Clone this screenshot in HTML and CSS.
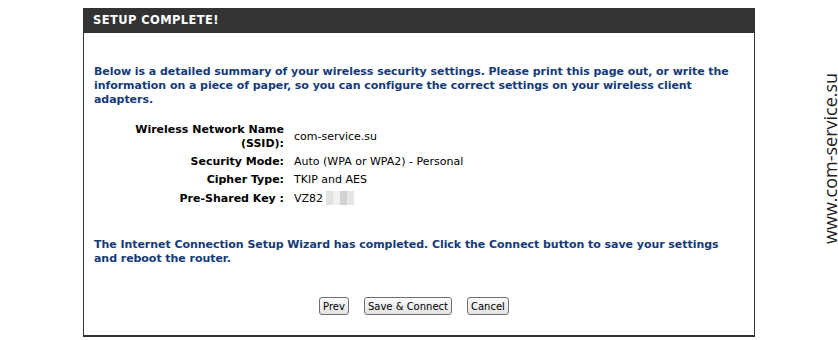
FILE: index.html
```
<!DOCTYPE HTML>
<html lang="en">
<head>
    <title>Setup Complete</title>
    <meta charset="utf-8">
    <link rel="stylesheet" href="styles.css">
</head>
<body>

<div class="page">
    <div class="box">
        <div class="box-head">SETUP COMPLETE!</div>
        <div class="box-body">
            <p class="note">Below is a detailed summary of your wireless security settings. Please print this page out, or write the information on a piece of paper, so you can configure the correct settings on your wireless client adapters.</p>

            <table class="summary">
                <tr class="tall">
                    <td class="label">Wireless Network Name (SSID):</td>
                    <td class="value">com-service.su</td>
                </tr>
                <tr>
                    <td class="label">Security Mode:</td>
                    <td class="value">Auto (WPA or WPA2) - Personal</td>
                </tr>
                <tr>
                    <td class="label">Cipher Type:</td>
                    <td class="value">TKIP and AES</td>
                </tr>
                <tr>
                    <td class="label">Pre-Shared Key :</td>
                    <td class="value">VZ82<span class="blur"><i class="b1"></i><i class="b2"></i><i class="b3"></i><i class="b4"></i></span></td>
                </tr>
            </table>

            <p class="note second">The Internet Connection Setup Wizard has completed. Click the Connect button to save your settings and reboot the router.</p>

            <div class="actions">
                <button type="button">Prev</button>
                <button type="button">Save &amp; Connect</button>
                <button type="button">Cancel</button>
            </div>
        </div>
    </div>

    <div class="watermark">www.com-service.su</div>
</div>

</body>
</html>
```

FILE: styles.css
```
html {
    height: 100%;
}
body {
    margin: 0;
    padding: 0;
    background: #ffffff;
    color: #000000;
    font-family: "DejaVu Sans", Verdana, sans-serif;
    font-size: 11px;
    line-height: 14px;
}

.page {
    position: relative;
    padding: 8px 0 0 83px;
    height: 332px;
}

.box {
    width: 670px;
    height: 327px;
    border-left: 1px solid #333333;
    border-right: 1px solid #333333;
    border-bottom: 2px solid #333333;
    display: flex;
    flex-direction: column;
}

.box-head {
    background-color: #333333;
    color: #ffffff;
    font-weight: bold;
    font-size: 11.5px;
    letter-spacing: 0.4px;
    height: 25px;
    line-height: 25px;
    padding-left: 10px;
    margin: 0 -1px;
}

.box-body {
    padding: 32px 10px 0 10px;
}

.note {
    margin: 0;
    color: #153a78;
    font-weight: bold;
    letter-spacing: -0.05px;
}

.note.second {
    margin-top: 30px;
}

.summary {
    border-collapse: collapse;
    margin: 14px 0 0 38px;
}
.summary td {
    padding: 2px 0;
    vertical-align: middle;
}
.summary .label {
    width: 152px;
    text-align: right;
    font-weight: bold;
    padding-right: 10px;
}
.summary .value {
    color: #000;
}

.blur {
    display: inline-flex;
    vertical-align: -3px;
    margin-left: 3px;
}
.blur i {
    display: block;
    width: 7px;
    height: 14px;
}
.blur .b1 { background: #e2e2e2; }
.blur .b2 { background: #f0f0f0; }
.blur .b3 { background: #d2d2d2; }
.blur .b4 { background: #e6e6e6; }

.actions {
    display: flex;
    justify-content: center;
    gap: 15px;
    margin: 31px 10px 0 0;
}

.actions button {
    font-family: "DejaVu Sans", Verdana, sans-serif;
    font-size: 10px;
    line-height: 13px;
    height: 18px;
    padding: 0 3px;
    color: #000;
    background: linear-gradient(#fbfbfb, #e3e3e3);
    border: 1px solid #707070;
    border-radius: 3px;
}

.watermark {
    position: absolute;
    left: 822px;
    top: 63px;
    height: 190px;
    writing-mode: vertical-rl;
    transform: rotate(180deg);
    text-align: center;
    font-family: "Open Sans", sans-serif;
    font-size: 18px;
    line-height: 16px;
    color: #222222;
}
```
